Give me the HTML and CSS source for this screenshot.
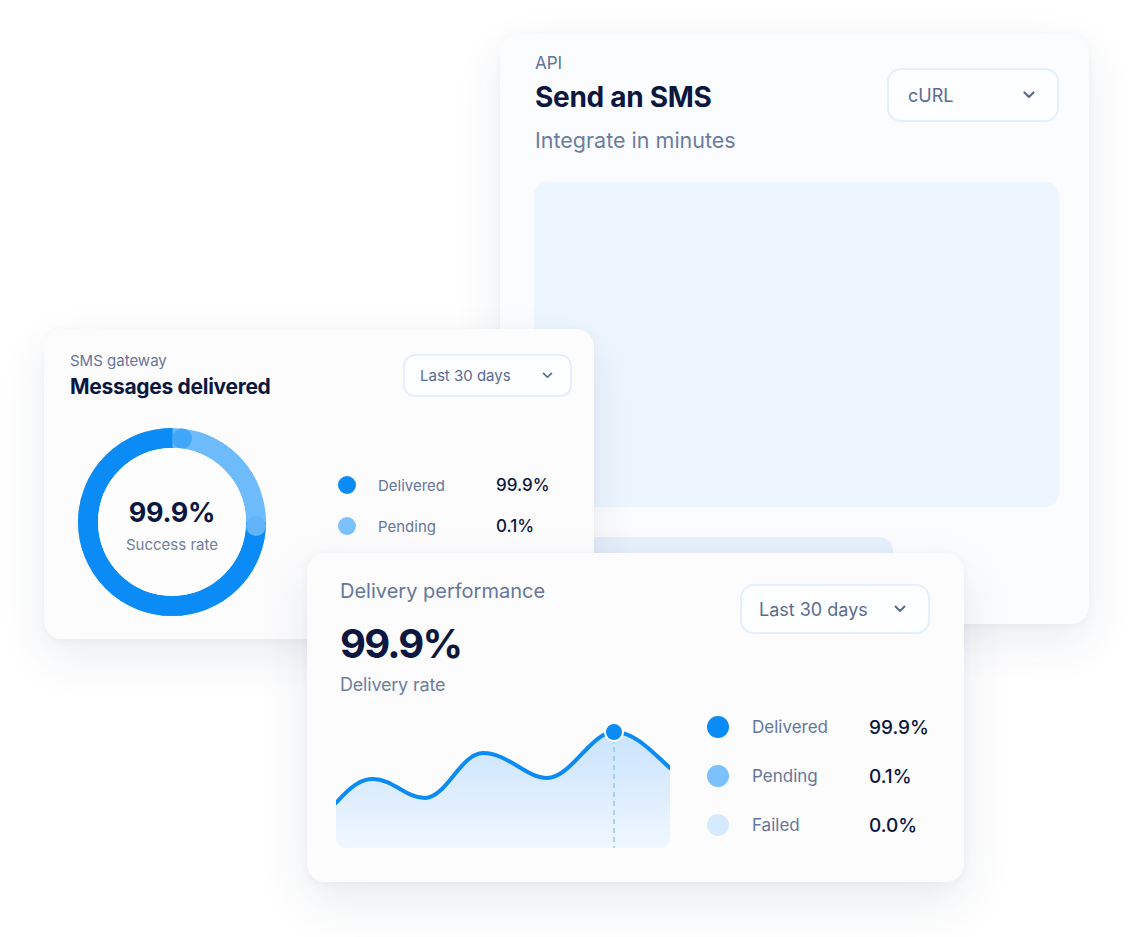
FILE: index.html
```html
<!DOCTYPE html>
<html lang="en">
<head>
<meta charset="utf-8">
<title>SMS dashboard</title>
<link rel="stylesheet" href="styles.css">
</head>
<body>
<div class="stage">

  <section class="card card-api">
    <div class="api-head">
      <div class="titles">
        <div class="eyebrow eyebrow-lg">API</div>
        <h2 class="title-xl">Send an SMS</h2>
        <div class="subtitle-lg">Integrate in minutes</div>
      </div>
      <div class="select select-api">
        <span>cURL</span>
        <svg class="chev" width="12" height="8" viewBox="0 0 12 8"><path d="M1.5 1.5 L6 6 L10.5 1.5" fill="none" stroke="currentColor" stroke-width="2.2" stroke-linecap="round" stroke-linejoin="round"/></svg>
      </div>
    </div>
    <div class="code-block"></div>
    <div class="code-bar"></div>
  </section>

  <section class="card card-gateway">
    <div class="gw-head">
      <div class="titles">
        <div class="eyebrow">SMS gateway</div>
        <h2 class="title-md">Messages delivered</h2>
      </div>
      <div class="select select-gw">
        <span>Last 30 days</span>
        <svg class="chev" width="11" height="7" viewBox="0 0 12 8"><path d="M1.5 1.5 L6 6 L10.5 1.5" fill="none" stroke="currentColor" stroke-width="2" stroke-linecap="round" stroke-linejoin="round"/></svg>
      </div>
    </div>
    <div class="gw-body">
      <div class="donut">
        <svg width="188" height="188" viewBox="0 0 188 188">
          <circle cx="94" cy="94" r="84" fill="none" stroke="#6dbbfb" stroke-width="20"/>
          <circle cx="94" cy="94" r="84" fill="none" stroke="#0a8bf6" stroke-width="20" stroke-dasharray="395.8 600"/>
          <circle cx="104" cy="10.6" r="10" fill="#3fa6f9"/>
          <circle cx="178" cy="98" r="10" fill="#62b4fa"/>
          <circle cx="94" cy="94" r="74" fill="#fdfdfe"/>
        </svg>
        <div class="donut-text">
          <div class="donut-value">99.9%</div>
          <div class="donut-label">Success rate</div>
        </div>
      </div>
      <ul class="legend legend-sm">
        <li><i class="dot dot-1"></i><span class="lg-label">Delivered</span><span class="lg-value">99.9%</span></li>
        <li><i class="dot dot-2"></i><span class="lg-label">Pending</span><span class="lg-value">0.1%</span></li>
      </ul>
    </div>
  </section>

  <section class="card card-perf">
    <div class="perf-head">
      <div class="titles">
        <div class="subtitle-md">Delivery performance</div>
        <div class="big-value">99.9%</div>
        <div class="rate-label">Delivery rate</div>
      </div>
      <div class="select select-perf">
        <span>Last 30 days</span>
        <svg class="chev" width="12" height="8" viewBox="0 0 12 8"><path d="M1.5 1.5 L6 6 L10.5 1.5" fill="none" stroke="currentColor" stroke-width="2" stroke-linecap="round" stroke-linejoin="round"/></svg>
      </div>
    </div>
    <div class="perf-body">
      <svg class="chart" width="334" height="130" viewBox="0 0 334 130">
        <defs>
          <linearGradient id="area" x1="0" y1="0" x2="0" y2="1">
            <stop offset="0" stop-color="#c9e3fd"/>
            <stop offset="1" stop-color="#f0f7ff"/>
          </linearGradient>
        </defs>
        <path d="M0,85 C15,68 25,61 37,61 C57,61 70,80 89,80 C110,80 125,35 147,35 C172,35 190,60 211,60 C235,60 255,14 278,14 C300,14 318,36 334,50 L334,118 Q334,130 322,130 L12,130 Q0,130 0,118 Z" fill="url(#area)"/>
        <line x1="278" y1="20" x2="278" y2="130" stroke="#8ec7fb" stroke-width="1.5" stroke-dasharray="5 4"/>
        <path d="M0,85 C15,68 25,61 37,61 C57,61 70,80 89,80 C110,80 125,35 147,35 C172,35 190,60 211,60 C235,60 255,14 278,14 C300,14 318,36 334,50" fill="none" stroke="#0a8bf6" stroke-width="4" stroke-linecap="round"/>
        <circle cx="278" cy="14" r="9" fill="#0a8bf6" stroke="#ffffff" stroke-width="2"/>
      </svg>
      <ul class="legend legend-lg">
        <li><i class="dot dot-1"></i><span class="lg-label">Delivered</span><span class="lg-value">99.9%</span></li>
        <li><i class="dot dot-2"></i><span class="lg-label">Pending</span><span class="lg-value">0.1%</span></li>
        <li><i class="dot dot-3"></i><span class="lg-label">Failed</span><span class="lg-value">0.0%</span></li>
      </ul>
    </div>
  </section>

</div>
</body>
</html>
```

FILE: styles.css
```css
* { box-sizing: border-box; }

html, body {
  margin: 0;
  padding: 0;
  background: #ffffff;
}

body {
  font-family: Inter, Roboto, "Liberation Sans", Arial, sans-serif;
  color: #0c1a45;
}

.stage {
  position: relative;
  width: 1134px;
  height: 937px;
  overflow: hidden;
}

.card {
  position: absolute;
  background: #fbfcfd;
  border-radius: 18px;
  box-shadow: 0 18px 48px rgba(36, 56, 96, 0.09), 0 2px 8px rgba(36, 56, 96, 0.04);
}

h2 { margin: 0; }
ul { margin: 0; padding: 0; list-style: none; }

/* ---------- API card ---------- */
.card-api {
  left: 500px;
  top: 34px;
  width: 589px;
  height: 590px;
  padding: 18px 30px 0 34px;
  display: flex;
  flex-direction: column;
}

.api-head {
  display: flex;
  justify-content: space-between;
  align-items: flex-start;
  padding-left: 1px;
}

.eyebrow {
  font-size: 15px;
  line-height: 20px;
  color: #66769a;
}

.eyebrow-lg {
  font-size: 17px;
  line-height: 22px;
  color: #5f7299;
}

.title-xl {
  margin-top: 6px;
  font-size: 28px;
  line-height: 34px;
  font-weight: 700;
  color: #0b1740;
  letter-spacing: -0.3px;
}

.subtitle-lg {
  margin-top: 12px;
  font-size: 21.5px;
  line-height: 28px;
  color: #6b7ca0;
}

.select {
  display: flex;
  align-items: center;
  justify-content: space-between;
  background: #fdfeff;
  border: 2px solid #e6effc;
  color: #5a6b92;
}

.chev { display: block; color: #5a6b8f; }

.select-api {
  margin-top: 16px;
  width: 172px;
  height: 54px;
  border-radius: 14px;
  padding: 0 22px 0 19px;
  font-size: 18px;
}

.code-block {
  margin-top: 28px;
  height: 325px;
  border-radius: 14px;
  background: #edf5fe;
}

.code-bar {
  margin-top: 30px;
  width: 359px;
  height: 40px;
  border-radius: 14px;
  background: #e7f0fc;
}

/* ---------- Gateway card ---------- */
.card-gateway {
  left: 44px;
  top: 329px;
  width: 550px;
  height: 310px;
  padding: 22px 22px 0 26px;
  background: #fcfcfd;
}

.gw-head {
  display: flex;
  justify-content: space-between;
  align-items: flex-start;
}

.title-md {
  margin-top: 2px;
  font-size: 21px;
  line-height: 28px;
  font-weight: 700;
  color: #0b1740;
  letter-spacing: -0.3px;
}

.select-gw {
  margin-top: 3px;
  width: 169px;
  height: 43px;
  border-radius: 12px;
  padding: 0 17px 0 15px;
  font-size: 15px;
}

.gw-body {
  display: flex;
  align-items: flex-start;
  margin-top: 27px;
  padding-left: 8px;
}

.donut {
  position: relative;
  width: 188px;
  height: 188px;
  flex: none;
}

.donut svg { display: block; }

.donut-text {
  position: absolute;
  inset: 0;
  display: flex;
  flex-direction: column;
  align-items: center;
  justify-content: center;
  padding-top: 7px;
}

.donut-value {
  font-size: 27px;
  line-height: 32px;
  font-weight: 700;
  color: #0b1740;
  letter-spacing: -0.3px;
}

.donut-label {
  margin-top: 6px;
  font-size: 15px;
  line-height: 20px;
  color: #6f7fa0;
}

.legend li {
  display: flex;
  align-items: center;
}

.dot {
  display: block;
  flex: none;
  border-radius: 50%;
}

.dot-1 { background: #0a8bf6; }
.dot-2 { background: #7cc1fb; }
.dot-3 { background: #d6eafe; }

.lg-label { color: #66769a; }
.lg-value { color: #0b1740; font-weight: 500; }

.legend-sm {
  margin-left: 72px;
  margin-top: 45px;
  display: flex;
  flex-direction: column;
  gap: 17px;
}

.legend-sm li { height: 24px; }
.legend-sm .dot { width: 18px; height: 18px; }
.legend-sm .lg-label { margin-left: 22px; width: 118px; font-size: 15px; }
.legend-sm .lg-value { font-size: 17px; }

/* ---------- Performance card ---------- */
.card-perf {
  left: 307px;
  top: 553px;
  width: 657px;
  height: 329px;
  padding: 25px 34px 0 33px;
  background: #fcfcfd;
  box-shadow: 0 20px 50px rgba(36, 56, 96, 0.1), 0 2px 8px rgba(36, 56, 96, 0.04);
}

.perf-head {
  display: flex;
  justify-content: space-between;
  align-items: flex-start;
}

.subtitle-md {
  font-size: 20px;
  line-height: 26px;
  color: #66769a;
}

.big-value {
  margin-top: 16px;
  font-size: 40px;
  line-height: 48px;
  font-weight: 700;
  color: #0b1740;
  letter-spacing: -1.8px;
}

.rate-label {
  margin-top: 5px;
  font-size: 18px;
  line-height: 24px;
  color: #6f7fa0;
  letter-spacing: -0.2px;
}

.select-perf {
  margin-top: 6px;
  width: 190px;
  height: 50px;
  border-radius: 14px;
  padding: 0 22px 0 17px;
  font-size: 18px;
}

.perf-body {
  display: flex;
  align-items: flex-start;
  margin-top: 21px;
  margin-left: -4px;
}

.chart { display: block; flex: none; }

.legend-lg {
  margin-left: 37px;
  margin-top: -4px;
  display: flex;
  flex-direction: column;
  gap: 23px;
}

.legend-lg li { height: 26px; }
.legend-lg .dot { width: 22px; height: 22px; }
.legend-lg .lg-label { margin-left: 23px; width: 117px; font-size: 17px; }
.legend-lg .lg-value { font-size: 19px; }
```
